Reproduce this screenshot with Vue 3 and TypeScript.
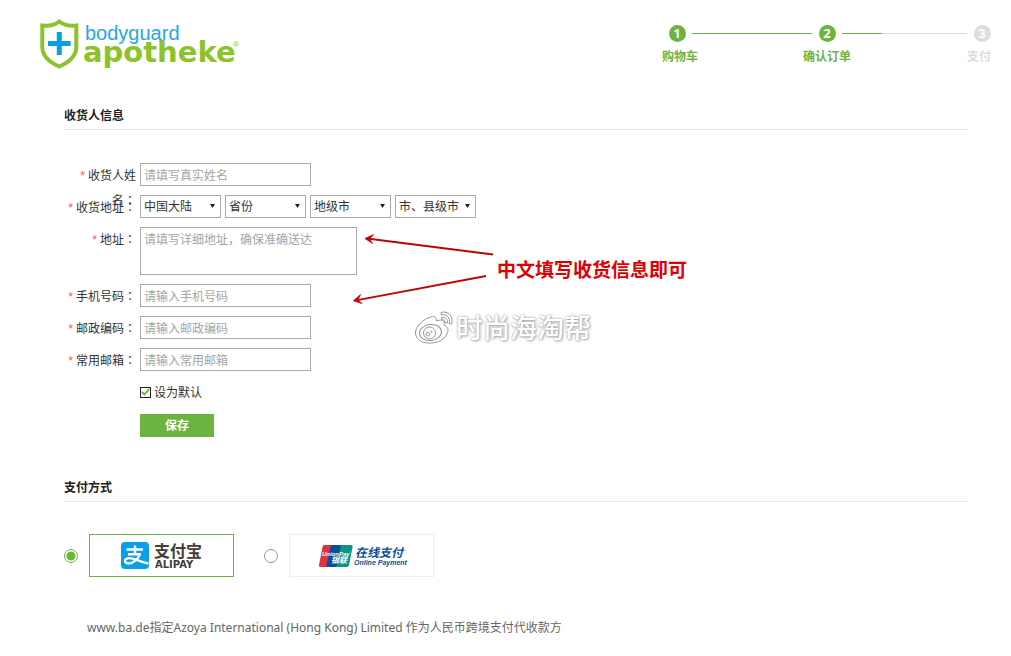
<script setup lang="ts">
import { ref } from 'vue'

interface Step { no: number; label: string; done: boolean }
interface Field { id: string; label: string; hint: string }

const steps: Step[] = [
  { no: 1, label: '购物车', done: true },
  { no: 2, label: '确认订单', done: true },
  { no: 3, label: '支付', done: false },
]
const contactFields: Field[] = [
  { id: 'mobile', label: '手机号码', hint: '请输入手机号码' },
  { id: 'postcode', label: '邮政编码', hint: '请输入邮政编码' },
  { id: 'email', label: '常用邮箱', hint: '请输入常用邮箱' },
]
const regions = [
  { id: 'country', name: '国家', value: '中国大陆' },
  { id: 'province', name: '省份', value: '省份' },
  { id: 'city', name: '地级市', value: '地级市' },
  { id: 'county', name: '市、县级市', value: '市、县级市' },
]
const isDefault = ref(true)
const payment = ref('alipay')
</script>

<template>
  <div class="page">
    <header class="header">
      <a href="#" class="brand" aria-label="bodyguard apotheke">
        <svg width="204" height="54" viewBox="0 0 204 54">
          <path d="M19.300 4.500 C15 8 9 9.300 2.300 8.500 V30 C2.300 39 9 45 19.300 49.500 C29.600 45 36.300 39 36.300 30 V8.500 C29.600 9.300 23.600 8 19.300 4.500 Z" fill="#fff" stroke="#8cc22a" stroke-width="4" />
          <path d="M19.300 15 V38 M8 26.500 H30.600" stroke="#0a9fe3" stroke-width="5" />
          <text x="45" y="23" class="brand-top">bodyguard</text>
          <text x="43" y="45" class="brand-main">apotheke</text>
          <text x="193" y="30" class="brand-mark">®</text>
        </svg>
      </a>
      <ol class="steps">
        <li v-for="s in steps" :key="s.no" class="step" :class="{ done: s.done }">
          <span class="dot">{{ s.no }}</span>
          <span class="step-label">{{ s.label }}</span>
        </li>
      </ol>
    </header>

    <main class="main">
      <h2 class="title">收货人信息</h2>
      <form class="form" @submit.prevent>
        <div class="row">
          <label class="label" for="name"><i>*</i> 收货人姓名<span class="colon">：</span></label>
          <input id="name" class="box" type="text" placeholder="请填写真实姓名" />
        </div>
        <div class="row">
          <label class="label" for="country"><i>*</i> 收货地址<span class="colon">：</span></label>
          <div class="selects">
            <span v-for="r in regions" :key="r.id" class="select-wrap">
              <select :id="r.id" class="box" :aria-label="r.name"><option>{{ r.value }}</option></select>
              <svg class="caret" width="5" height="4" viewBox="0 0 5 4"><path d="M0 0 H5 L2.500 4 Z" fill="#222" /></svg>
            </span>
          </div>
        </div>
        <div class="row">
          <label class="label" for="address"><i>*</i> 地址<span class="colon">：</span></label>
          <textarea id="address" class="box" placeholder="请填写详细地址，确保准确送达"></textarea>
        </div>
        <div v-for="f in contactFields" :key="f.id" class="row">
          <label class="label" :for="f.id"><i>*</i> {{ f.label }}<span class="colon">：</span></label>
          <input :id="f.id" class="box" type="text" :placeholder="f.hint" />
        </div>
        <div class="actions">
          <label class="default">
            <span class="check">
              <input v-model="isDefault" type="checkbox" />
              <svg v-if="isDefault" width="9" height="8" viewBox="0 0 9 8"><path d="M0.800 4 L3.400 6.500 L8.200 0.800" fill="none" stroke="#6cb33f" stroke-width="1.800" /></svg>
            </span>
            设为默认
          </label>
          <button class="save" type="submit">保存</button>
        </div>
      </form>

      <h2 class="title">支付方式</h2>
      <div class="payments">
        <label class="pay">
          <input v-model="payment" type="radio" name="payment" value="alipay" />
          <span class="card">
            <svg width="84" height="30" viewBox="0 0 84 30" role="img" aria-label="支付宝">
              <rect x="1" y="1" width="28" height="27" rx="4" fill="#0a9fe8" />
              <g fill="none" stroke="#fff" stroke-width="2.400">
                <path d="M6.500 8.500 H23 M15 4.500 V13.500 M8 13.300 H21" />
                <path d="M20 12.500 C18.500 17.500 13.500 22.500 8.500 22.500 C4.500 22.500 3.500 18.500 7.500 17.300 C11.500 16 18 20 28.500 22.500" />
              </g>
              <text x="34" y="16" class="ali-cn">支付宝</text>
              <text x="35" y="27" class="ali-en">ALIPAY</text>
            </svg>
          </span>
        </label>
        <label class="pay">
          <input v-model="payment" type="radio" name="payment" value="unionpay" />
          <span class="card">
            <svg width="88" height="26" viewBox="0 0 88 26" role="img" aria-label="银联在线支付">
              <path d="M6 2 H16 L11 24 H3 Q0.500 24 1 22 L4.500 4 Q5 2 6 2 Z" fill="#e0343a" />
              <path d="M13 2 H25 L20 24 H8 Z" fill="#0a4f97" />
              <path d="M23 2 H33 Q35 2 34.600 4 L31 22 Q30.500 24 28.500 24 H18 Z" fill="#0d9488" />
              <text x="4" y="13" class="up-en">UnionPay</text>
              <text x="13" y="20" class="up-cn">银联</text>
              <text x="37" y="14" class="online-cn">在线支付</text>
              <text x="36" y="22" class="online-en">Online Payment</text>
            </svg>
          </span>
        </label>
      </div>
      <p class="note">www.ba.de指定Azoya International (Hong Kong) Limited 作为人民币跨境支付代收款方</p>
    </main>

    <svg class="arrows" width="150" height="76" viewBox="0 0 150 76" fill="none" stroke="#b90808" stroke-width="1.800">
      <path d="M143 24.500 L17 8.500" />
      <path d="M136 46 L6 70.300" />
      <path d="M15 8.500 L23.500 4.500 L19.500 9 L22.500 13.500 Z M3.500 70.800 L10.500 64.500 L8 70 L12 73.500 Z" fill="#b90808" stroke-width="0.800" />
    </svg>
    <p class="callout">中文填写收货信息即可</p>
    <div class="watermark">
      <svg width="40" height="36" viewBox="0 0 40 36" fill="#fff" stroke="#999" stroke-width="1">
        <path d="M16 7.500 C19 5.500 23 6 22.300 11 C27 9 31.500 10 30 15 C34 16.500 35 20 33 24 C30 30.500 22 33.500 14 33 C6 32.500 1 28 1.500 22 C2 16 10 8.500 16 7.500 Z" />
        <ellipse cx="16.500" cy="22.500" rx="11" ry="8" transform="rotate(-8 16.500 22.500)" />
        <circle cx="15.500" cy="23" r="6" />
        <circle cx="13.800" cy="24.300" r="1.800" />
        <circle cx="17.500" cy="21.800" r="0.700" />
        <path d="M27 2.500 C34 0 40 7 37.500 14 L35 13.500 C37 8 32.500 3.500 27.500 5 Z" />
        <path d="M27.500 7.500 C31.500 6.500 34.500 9.500 33.300 13 L31 12.500 C31.500 10.500 30 9.300 28 9.800 Z" />
      </svg>
      <span>时尚海淘帮</span>
    </div>
  </div>
</template>

<style>
body { margin: 0; background: #fff; }
</style>

<style scoped>
.page, .page input, .page select, .page textarea, .page button {
  font-family: "Noto Sans", "Noto Sans CJK SC", sans-serif;
  font-size: 12px;
}
.page { position: relative; color: #333; box-sizing: border-box; padding-bottom: 12px; }
.page *, .page *::before, .page *::after { box-sizing: border-box; }
.page svg { overflow: visible; }

.header { display: flex; justify-content: space-between; align-items: flex-start; padding: 17px 14px 0 40px; height: 105px; }
.brand svg { display: block; }
.brand-top { font: 20px "Liberation Sans", Arial, sans-serif; fill: #27a5e2; }
.brand-main { font: bold 29px "DejaVu Sans", sans-serif; fill: #8cc22a; }
.brand-mark { font: 8px "Liberation Sans", Arial, sans-serif; fill: #8cc22a; }

.steps { display: flex; list-style: none; margin: 0; padding: 7px 0 0; color: #ddd; font-weight: bold; }
.step { position: relative; display: flex; flex-direction: column; align-items: center; width: 30px; }
.step:nth-child(2) { margin-left: 120px; }
.step:nth-child(3) { margin-left: 125px; }
.step + .step::before { content: ""; position: absolute; right: 100%; top: 9px; height: 1px; width: 120px; background: #6cb33f; }
.step:nth-child(3)::before { width: 125px; background: linear-gradient(to right, #6cb33f 40px, #ddd 40px); }
.step.done { color: #6cb33f; }
.dot { width: 17px; height: 17px; margin-top: 1px; border-radius: 50%; background: currentColor; font-size: 13px; line-height: 17px; text-align: center; -webkit-text-fill-color: #fff; }
.step-label { margin-top: 5px; line-height: 20px; white-space: nowrap; }
.step:first-child .step-label, .step:last-child .step-label { align-self: flex-start; }

.main { padding: 0 43px 0 64px; }
.title { margin: 0; height: 25px; line-height: 22px; font-size: 12px; font-weight: bold; color: #222; border-bottom: 1px solid #e8e8e8; }

.form { display: flex; flex-direction: column; gap: 9px; padding: 33px 0 40px; }
.row { display: flex; align-items: flex-start; gap: 4px; min-height: 23px; }
.label { width: 72px; height: 23px; line-height: 25px; text-align: right; }
.label i { font: 12px/1 "Liberation Sans", Arial, sans-serif; color: #f55; }
.colon { font-family: "Noto Sans CJK TC", sans-serif; line-height: 1; }
.page .box { display: block; margin: 0; border: 1px solid #aaa; border-radius: 0; background: #fff; color: #333; outline: 0; }
.page input.box { width: 171px; height: 23px; padding: 1px 3px 0; }
.page textarea.box { width: 217px; height: 48px; padding: 3px; line-height: 18px; resize: none; }
.box::placeholder { color: #a5a5a5; opacity: 1; }
.selects { display: flex; gap: 4px; }
.select-wrap { position: relative; }
.page select.box { appearance: none; width: 81px; height: 23px; padding: 0 3px; }
.caret { position: absolute; right: 6px; top: 9px; pointer-events: none; }

.actions { display: flex; flex-direction: column; align-items: flex-start; gap: 12px; padding: 2px 0 0 76px; }
.default { display: flex; align-items: center; gap: 3px; height: 20px; }
.check { position: relative; width: 11px; height: 11px; }
.check input { appearance: none; display: block; width: 11px; height: 11px; margin: 0; border: 1px solid #222; }
.check svg { position: absolute; left: 1px; top: 1px; pointer-events: none; }
.page .save { width: 74px; height: 23px; padding: 0; border: 0; background: #6cb33f; color: #fff; font-weight: bold; line-height: 23px; }

.payments { display: flex; gap: 30px; padding-top: 32px; }
.pay { display: flex; align-items: center; gap: 11px; }
.pay input { appearance: none; width: 14px; height: 14px; margin: 0; border: 1px solid #999; border-radius: 50%; background: #fff; }
.pay input:checked { border-color: #6cb33f; background: radial-gradient(circle, #6cb33f 4px, #fff 5px); }
.card { display: flex; align-items: center; justify-content: center; width: 145px; height: 43px; border: 1px solid #eee; }
.pay input:checked + .card { border-color: #6cb33f; }
.ali-cn { font: bold 16px "Noto Sans CJK SC", sans-serif; fill: #443c38; }
.ali-en { font: bold 10px "DejaVu Sans", sans-serif; fill: #443c38; }
.up-en { font: italic bold 6px "Liberation Sans", sans-serif; fill: #fff; }
.up-cn { font: italic bold 8px "Noto Sans CJK SC", sans-serif; fill: #fff; }
.online-cn { font: italic bold 12px "Noto Sans CJK SC", sans-serif; fill: #0a4f97; }
.online-en { font: italic bold 7px "Liberation Sans", sans-serif; fill: #0a4f97; }
.note { margin: 40px 0 0; padding-left: 23px; line-height: 21px; color: #666; }

.arrows { position: absolute; left: 350px; top: 230px; pointer-events: none; }
.callout { position: absolute; left: 497px; top: 257px; margin: 0; font-size: 19px; line-height: 26px; font-weight: bold; color: #e00000; white-space: nowrap; }
.watermark { position: absolute; left: 414px; top: 310px; display: flex; align-items: center; gap: 2px; white-space: nowrap; font-size: 27px; line-height: 36px; font-weight: 500; color: #fff; text-shadow: 0 0 2px #999, 1px 1px 3px #aaa; pointer-events: none; }
</style>
